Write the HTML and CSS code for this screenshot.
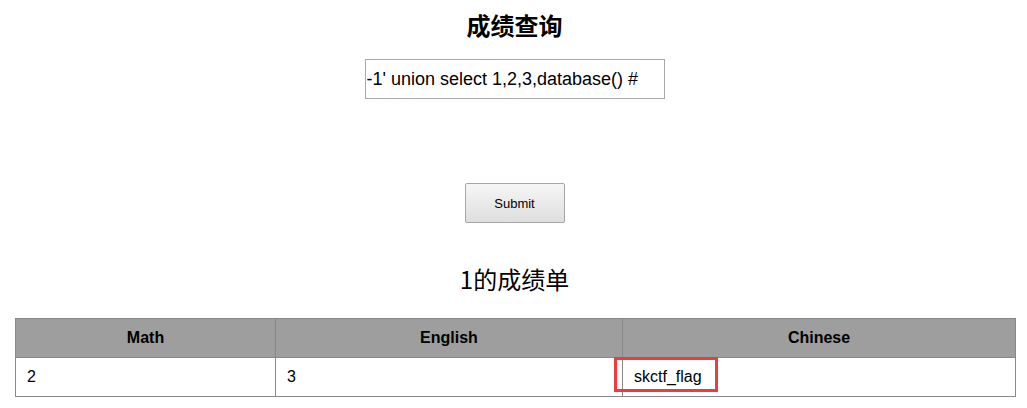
FILE: index.html
```html
<!DOCTYPE html>
<html lang="zh">
<head>
<meta charset="utf-8">
<title>成绩查询</title>
<link rel="stylesheet" href="styles.css">
</head>
<body>
<div class="page">
  <h1 class="title">成绩查询</h1>
  <form class="query">
    <input class="field" type="text" value="-1' union select 1,2,3,database() #">
    <button class="submit" type="button">Submit</button>
  </form>
  <h2 class="subtitle">1的成绩单</h2>
  <div class="table-wrap">
    <table class="scores">
      <colgroup>
        <col class="c-math">
        <col class="c-eng">
        <col class="c-chn">
      </colgroup>
      <thead>
        <tr><th>Math</th><th>English</th><th>Chinese</th></tr>
      </thead>
      <tbody>
        <tr><td>2</td><td>3</td><td class="flag-cell"><span class="flag">skctf_flag</span></td></tr>
      </tbody>
    </table>
  </div>
</div>
</body>
</html>
```

FILE: styles.css
```css
html, body {
  margin: 0;
  padding: 0;
  background: #fff;
}
body {
  font-family: "Liberation Sans", Arial, "Noto Sans CJK SC", sans-serif;
  color: #000;
}
.page {
  display: flex;
  flex-direction: column;
  align-items: center;
  padding-left: 2px;
}
.title {
  margin: 9px 0 0;
  font-family: "Noto Sans CJK SC", sans-serif;
  font-weight: bold;
  font-size: 24px;
  line-height: 32px;
  height: 32px;
}
.query {
  display: flex;
  flex-direction: column;
  align-items: center;
  margin-top: 18px;
}
.field {
  box-sizing: border-box;
  width: 300px;
  height: 40px;
  border: 1px solid #a9a9a9;
  padding: 0 1px;
  font-family: "Liberation Sans", Arial, sans-serif;
  font-size: 18px;
  color: #000;
  outline: none;
  margin: 0;
}
.submit {
  box-sizing: border-box;
  width: 100px;
  height: 40px;
  margin-top: 84px;
  border: 1px solid #a6a6a6;
  border-radius: 2px;
  background: linear-gradient(#f6f6f6, #dedede);
  font-family: "Liberation Sans", Arial, sans-serif;
  font-size: 13px;
  color: #000;
  padding: 0;
}
.subtitle {
  margin: 39px 0 0;
  font-family: "Noto Sans CJK SC", sans-serif;
  font-weight: normal;
  font-size: 24px;
  line-height: 34px;
  height: 34px;
}
.table-wrap {
  align-self: stretch;
  padding: 0 12px 0 13px;
  margin-top: 22px;
}
.scores {
  width: 1000px;
  border-collapse: collapse;
  table-layout: fixed;
  font-family: "Liberation Sans", Arial, sans-serif;
  font-size: 16px;
}
.c-math { width: 260px; }
.c-eng { width: 347px; }
.c-chn { width: 393px; }
.scores th, .scores td {
  border: 1px solid #888;
  height: 39px;
  padding: 0 11px;
  box-sizing: border-box;
}
.scores th {
  background: #9e9e9e;
  font-weight: bold;
  text-align: center;
}
.scores td {
  text-align: left;
}
.flag-cell {
  position: relative;
}
.flag {
  position: relative;
}
.flag::after {
  content: "";
  position: absolute;
  left: -20px;
  top: -11px;
  width: 104px;
  height: 35px;
  box-sizing: border-box;
  border: 3px solid #ee3b40;
}
```
